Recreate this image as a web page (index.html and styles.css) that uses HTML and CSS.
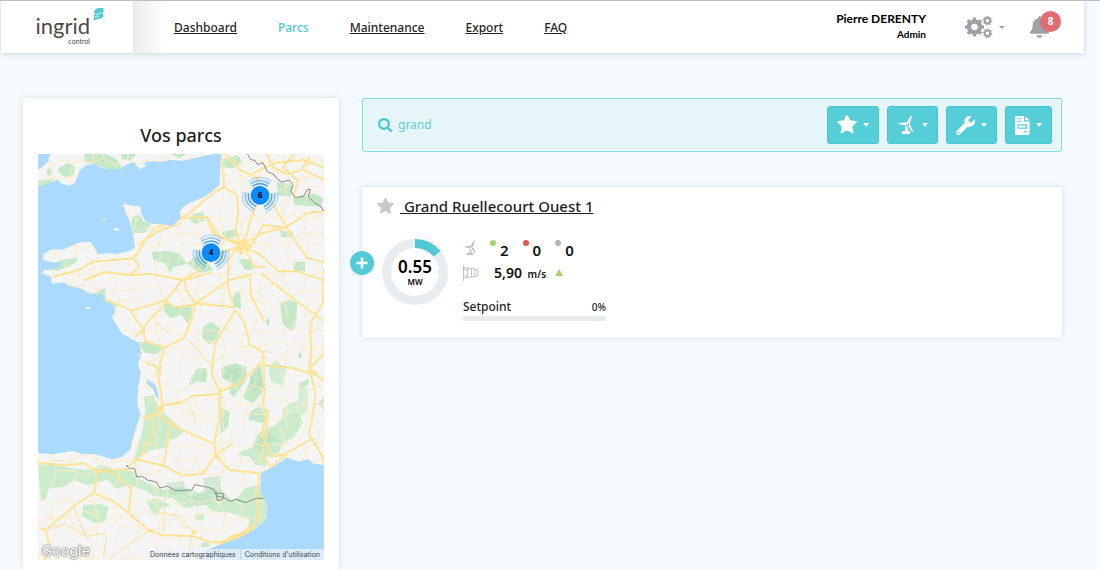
FILE: index.html
```html
<!DOCTYPE html>
<html lang="fr">
<head>
    <meta charset="UTF-8">
    <meta name="viewport" content="width=device-width, initial-scale=1.0">
    <title>ingrid control</title>
    <link rel="stylesheet" href="styles.css">
</head>
<body>
    <svg class="defs" width="0" height="0" aria-hidden="true">
        <symbol id="star" viewBox="64 128 1664 1587">
            <path d="M1728 647q0 22-26 48l-363 354 86 500q1 7 1 20 0 21-10.5 35.5t-30.5 14.5q-19 0-40-12l-449-236-449 236q-22 12-40 12-21 0-31.5-14.5t-10.5-35.5q0-6 2-20l86-500-364-354q-25-27-25-48 0-37 56-46l502-73 225-455q19-41 49-41t49 41l225 455 502 73q56 9 56 46z"/>
        </symbol>
        <symbol id="turbine" viewBox="0 0 20 20">
            <path d="M0 8.400 9.600 7a2 2 0 0 1 1.200 3L8.600 10.600zM10.600 6.800 14.600 0l1.300.4-2.600 8.400a2 2 0 0 1-2.700-2zM11.400 10.600l2.200-1.400 3.400 7.600-1.200.6zM8.800 11.400h2.200l.4 5h2.300v3H5v-3h3.500z"/>
        </symbol>
    </svg>

    <header class="header">
        <a class="logo" href="#" aria-label="ingrid control">
            <span class="logo-name">ingrid</span>
            <span class="logo-sub">control</span>
            <svg class="logo-leaf" width="10" height="13" viewBox="0 0 10 13">
                <path fill="#4fcbd5" d="M0 12.500V5.500Q0 0 5.500 0H9.500v5.500q0 5-5 5.500-2 .2-4.500 1.500z"/>
                <path fill="none" stroke="#fff" stroke-width=".8" d="M0 5.500q2.500 1.500 5 .3t5-.8M.5 9q2.500.6 4.500-1"/>
            </svg>
        </a>
        <nav class="nav">
            <a href="#">Dashboard</a>
            <a href="#" class="active">Parcs</a>
            <a href="#">Maintenance</a>
            <a href="#">Export</a>
            <a href="#">FAQ</a>
        </nav>
        <div class="user">
            <div class="user-name">Pierre DERENTY</div>
            <div class="user-role">Admin</div>
        </div>
        <button class="icon-btn settings" aria-label="Réglages">
            <svg width="28" height="22" viewBox="0 0 28 22" fill="none" stroke="#9da2a6">
                <circle cx="9.500" cy="11" r="5.500" stroke-width="4.500"/>
                <circle cx="9.500" cy="11" r="8.300" stroke-width="2.600" pathLength="80" stroke-dasharray="5 5" stroke-dashoffset="2.500"/>
                <circle cx="22.500" cy="4.800" r="2.700" stroke-width="2"/>
                <circle cx="22.500" cy="4.800" r="4" stroke-width="1.600" pathLength="80" stroke-dasharray="5 5"/>
                <circle cx="22.500" cy="17.200" r="2.700" stroke-width="2"/>
                <circle cx="22.500" cy="17.200" r="4" stroke-width="1.600" pathLength="80" stroke-dasharray="5 5"/>
            </svg>
            <span class="caret"></span>
        </button>
        <button class="icon-btn bell" aria-label="Notifications">
            <svg width="19" height="22" viewBox="0 0 448 512" fill="#9da2a6">
                <path d="M224 512c35.320 0 63.970-28.650 63.970-64H160.030c0 35.350 28.650 64 63.970 64zm215.390-149.710c-19.320-20.760-55.470-51.990-55.470-154.290 0-77.700-54.480-139.900-127.940-155.160V32c0-17.670-14.320-32-31.980-32s-31.980 14.330-31.980 32v20.840C118.560 68.100 64.080 130.300 64.080 208c0 102.300-36.150 133.530-55.470 154.290-6 6.450-8.660 14.160-8.610 21.710.11 16.400 12.980 32 32.100 32h383.800c19.120 0 32-15.600 32.100-32 .05-7.550-2.610-15.270-8.610-21.710z"/>
            </svg>
            <span class="badge">8</span>
        </button>
    </header>

    <main class="content">
        <section class="map-card">
            <h1>Vos parcs</h1>
            <div class="map">
                <svg viewBox="54 192 858 1218" preserveAspectRatio="xMidYMid slice">
                    <defs>
                        <pattern id="lanes" width="190" height="170" patternUnits="userSpaceOnUse">
                            <path fill="none" stroke="#fcecc6" stroke-width="3" stroke-linejoin="round" d="M0 40l28 8 30-14 40 22 34-18 28 10 30-8M20 0l12 24-4 24 18 40-10 36 6 46-22 0M98 56l-8 34 20 30-14 50M132 38l8-38M160 48l-14 46 22 30 22 14M0 138l36-14 54-34 56 4 44-22M0 72l46 16M110 120l58 4-8 46M58 34l10-34"/>
                        </pattern>
                        <g id="cluster">
                            <g fill="none" stroke="#1a8df0" stroke-width="5">
                                <circle r="35" pathLength="360" stroke-dasharray="80 40" transform="rotate(-130)" stroke-opacity=".75"/>
                                <circle r="44" pathLength="360" stroke-dasharray="80 40" transform="rotate(-130)" stroke-opacity=".5"/>
                                <circle r="53" pathLength="360" stroke-dasharray="80 40" transform="rotate(-130)" stroke-opacity=".25"/>
                            </g>
                            <circle r="28" fill="#0a8cff"/>
                        </g>
                    </defs>
                    <rect x="54" y="192" width="858" height="1218" fill="#f5f5f5"/>

                    <!-- forêts -->
                    <g fill="#c5e8c8">
                        <path d="M195 192h60l30 12 20 25-5 8h-38l-40-14-30-8zM120 230l25-12 20 10-5 28-22 8-24-20zM78 240l15-6 4 16-12 8zM54 272l50-6-20 18-30 4zM305 192h45l-20 20-25-4zM450 192h50l-20 12zM610 205l45-8 12 20-30 18-28-4zM770 275l50 10-8 35-38-5zM820 325l60-15 30 14-8 26-80-5z"/>
                        <path d="M335 380l25-5 10 20 24 5-18 28-40 2zM395 485l50-3 35 10 20 30-40 10-10 18-15-30-35-10zM520 372l30-6 6 24-26 12-20-8zM605 425l45-8 5 20-45 12zM500 520l40-30 40 50-40 10zM655 505l40 5 5 28-25 2zM780 420l40 5-5 15-30 2zM820 515h35v28l-35 4z"/>
                        <path d="M90 540l25-28 60-10-10 18-50 22zM215 612l40-18 3 40-28-6zM258 635l35 5-8 20-22-2zM433 634l30 16 50-8 4 40-14 18-20-25-30 10-20-20zM550 710l22-15 28 18-10 35-22 14-22-18zM780 640l30-10 22 8-2 40-6 38-12 6-24-20zM636 625l24-18 4 52-22-10zM345 755l60 5 28 18-25 15-32-4z"/>
                        <path d="M510 870l12-20 8-14 26-2 6 14-4 30-26-4-22 12zM605 830l40-10 35 12-4 40-34 50-14-14 8-28-30-16zM696 850l24-32 6 30 8 50-35 42-30-15 14-36zM600 955l28 8-4 48-22 20zM690 965l30-18 22 24-8 30-48-12zM838 880l30-14-5 20-25 16zM895 940l17-20v40zM600 800l8-4 2 6-8 4zM640 616l6-10 12 2-2 10zM738 690l8-6 2 20-8 4zM835 790l8-4 2 16-10 2z"/>
                    </g>
                    <path fill="#d3edd4" d="M745 830l25-20 28 30-10 48-36-14zM840 890l24 6-2 70-40 20-30-6-8-20 26-20 22-6z"/>
                    <path fill="#cbeccc" d="M370 920l30-4 18 40 40 36 34 32-22 20-24 6-8 22-50 10-34 20-12 8 25-90 10-60zM655 1088l40-14 20-44 50-24 30-30 40-10 12 30-20 40-40 26-10 26-34 16-6 26-30-6-20-24-32-4zM54 1124h50l50 10 60 6 30-16 46 16 36-6 38 36 66 30 60-10 46 18 40-12 28 4 30 30 16-6 26-30 40-10 32 8 6 130-60 30-20-14 16-50-60-20-50-4-26-20-60 10-36-30-60-6-20-16-50-16-40 10-26-26-60 16-40-16-30 20-46 6-8 30-16 6zM190 1246l50-4 26 10-10 40-30 10-40-24zM380 1235l24-10 50 20-30 10-22 24zM525 1272h28l-4 20-24-4zM545 1360l26-8-6 20h-22zM178 1370h32v22h-28z"/>
                    <path fill="#b3dcb9" fill-opacity=".5" d="M550 1165l50-8 4 60-50-10zM620 835l50 0-20 40-40-10zM690 860l30-20 8 50-30 20zM440 1180l50-8 10 40-50 4zM700 1060l50-30 20 20-50 40zM500 1220l60-10 20 30-50 6z"/>
                    <rect x="54" y="192" width="858" height="1218" fill="url(#lanes)"/>

                    <!-- autoroutes -->
                    <g fill="none" stroke="#ffe396" stroke-width="6" stroke-linejoin="round" stroke-linecap="round">
                        <path d="M602 192l6 60 4 40 38 22 5 50-10 60 18 40M615 192l45 48 50 22 10 60-30 70-18 76M660 468l60-36 80-22 60-40 52-6M740 192l20 40 40 20 40-10 30-40M700 250l60-30 90-10 62 22M820 192l-30 40 44 40-14 50M912 270l-60-30M655 460l-75-30-20-50-80 6M480 386l30-18 70-60 32-16M560 380l40 60 56 26M655 470l-82 30-50 50-36 20M655 470l60 20 60 54 56 0 80 28M655 470l-30 40-2 74 14 60M672 470l30 60 30 0M690 475l40-70 70 8 60 90 52 14M800 412l-44-74M480 386l-80 30-40 60-20 30M480 400l-60 20-60 40"/>
                        <path d="M338 505l-120 10-40 24-74 20M338 500l20 30-30 26-70-10-66 24M330 556l60-5 100 20 44-12 40-12M487 568l-50 64-100 30-70-30-120-44M495 570l2 30 30 40 114 12M437 632l30 20 60-8M527 640l100-70 60-16M437 640l-50 50-18 30-20 18M330 660l40 60 6 34 58 18 60-30 34-104M645 660l-60 100-10 90 25 60-4 60M645 660l28 36 16 68 38 22 4 50 4 60-6 50 14 30-4 60-14 60 30 40"/>
                        <path d="M690 555l2 60 40 80M725 550l60 50 80 60 47 32M912 540l-4 100-38 60 4 90-6 60-50-16-90-8M872 850l14 60-6 60-14 60 46 80M870 836l42-46M880 850l32 22M600 905l60-26 64-62M600 912l-84 6-30 18-56 10-20 16M382 820l28 10 10 60 8 50-15 30 36 30 60 30 70 30 10 20M372 984l40-14M402 985l-4 50-40 70-30 22M434 772l-14 50 0 30M600 900l-2 90-16 70 6 40M588 1095l50-36M588 1095l-40 56-60 6-60-30-82-20M588 1100l40 40 90 10M455 990l-14 80-10 58M745 960l-20 70 30 70 40-8 80-46 37 60M755 1130l40-34M718 1150l-6 60 0 80-20 30-60 20-48 36"/>
                        <path d="M54 1118l80 8 60-6 30 22 100-4M230 1142l-6 64-64 44-84 70-22-8M228 1212l50 20 50 40 60 50 40 14 90 2 60 20 60-8 90-40M225 1142l40 4M270 1145l64 50-8 70M76 1320l16 60-20 30M640 1345l-50 30-50 30"/>
                    </g>
                    <g fill="none" stroke="#ffe396" stroke-width="10" stroke-linecap="round">
                        <path d="M640 452l40 24M645 482l40-16M668 450l-6 40M415 952l12 6M870 840l16 10M586 1094l8 10M640 1346l50-30M518 1326h8M390 1322h6"/>
                    </g>
                    <g fill="none" stroke="#fbe0a0" stroke-width="3">
                        <path d="M402 700l14 4 18 16 14 14M500 750l24 16 26 34 24 28M512 955l8 20 8 30M734 780l20 10M820 756l14 4 10 10M76 1320l60-20 60 40 60-10M160 1250l40 90M260 1340l-10 60M388 1322l-60 40-60 40M436 1220l-6 110M520 1326l-50-50-60-10M520 1326l-20 80"/>
                    </g>

                    <!-- mers -->
                    <g fill="#aadaff">
                        <path d="M54 192h36l-5 22-15 14-16 12z"/>
                        <path d="M54 288l20-3 22-9 18-8 8 12 26 7 16-7 8-18 8-22 20-15 25-3 15 10 22 6 38-2 24-14 16-7 18 23 20-10-6-12 28-2 22 2 28-6 40 2 50-12 40-8h22l-1 38-3 55-23 20-25 17-40 16-20 12-12 18 6 15-28 25-25-5-30-1-25-8-12-24-4-22-18-1-34-6 10 30 10 18 10 40 7 45-15 8-40 10-20-3-35 4-10-16-12-20-35 0-50 22-30-2-28 14-2 18 20 6 38 4-10 14-42 8-10 8 29 12 1 20 38-4 14 10 40 10 20 12 18 4 24-2 8 24 18 4 12 26-10 18 30 48 50 27 8 35-10 30 8 25-6 35-5 60 10 30-25 80-5 25-25 23-30 7-50-15-40-2-30-8-60 10-56-5z"/>
                        <path d="M380 868l24 14 8 20 4 24-8-6-8-22-18-16z"/>
                        <path d="M912 1125l-32-4-16-14-28 8-36-12-40 27-38 20 0 50 13 32 9 18-6 40-36 30-47 25-56 20-40 15-16 30h369z"/>
                    </g>
                    <g fill="#f5f5f5">
                        <path d="M248 387l6-4 3 4-6 4zM281 413l16 4v6l-14-2zM196 650l14 2 2 7-12-3zM353 812l12 6 2 18-12-12zM350 790l12 4-4 4z"/>
                    </g>

                    <!-- frontières -->
                    <g fill="none" stroke="#8d8d8d" stroke-width="3" stroke-linejoin="round">
                        <path d="M683 192l8 16 14 4 8 12 16-6 12 26 18 8 16 18 10 6 22-6 12 14-6 20 12 18 24-2 14-22 8 0-6 22 18 18 18 10 11 15"/>
                        <path d="M318 1126l10 8 16 2 6 24 18 0 14 10 26 6 12 18 22-6 24 14 50-2 8-16 40 8 18 6 8 20 20 4 22 12 16-6 30 10 34-14 18 2M588 1208l24 4-4 16-16 4z"/>
                    </g>

                    <use href="#cluster" x="720" y="316"/>
                    <use href="#cluster" x="573" y="488"/>
                    <g class="cluster-count">
                        <text x="720" y="324">6</text>
                        <text x="573" y="496">4</text>
                    </g>
                </svg>
                <span class="map-logo">Google</span>
                <div class="map-legal">
                    <a href="#">Données cartographiques</a>
                    <a href="#">Conditions d'utilisation</a>
                </div>
            </div>
        </section>

        <section class="list">
            <div class="search">
                <label for="q" aria-label="Rechercher">
                    <svg width="14" height="14" viewBox="64 128 1664 1664" fill="#45c8d2">
                        <path d="M1216 832q0-185-131.500-316.500t-316.500-131.500-316.500 131.500-131.500 316.500 131.500 316.500 316.500 131.500 316.500-131.500 131.500-316.500zm512 832q0 52-38 90t-90 38q-54 0-90-38l-343-342q-179 124-399 124-143 0-273.500-55.500t-225-150-150-225-55.500-273.500 55.500-273.500 150-225 225-150 273.500-55.500 273.500 55.500 225 150 150 225 55.500 273.500q0 220-124 399l343 343q37 37 37 90z"/>
                    </svg>
                </label>
                <input id="q" type="text" value="grand">
                <div class="filters">
                    <button aria-label="Favoris">
                        <svg width="20" height="20"><use href="#star"/></svg>
                        <span class="caret"></span>
                    </button>
                    <button aria-label="Éoliennes">
                        <svg width="19" height="20"><use href="#turbine"/></svg>
                        <span class="caret"></span>
                    </button>
                    <button aria-label="Maintenance">
                        <svg width="19" height="19" viewBox="0 0 512 512">
                            <path d="M507.730 109.100c-2.240-9.030-13.540-12.090-20.120-5.510l-74.360 74.360-67.880-11.310-11.310-67.880 74.360-74.360c6.620-6.620 3.430-17.900-5.660-20.160-47.380-11.740-99.550.91-136.580 37.930-39.640 39.640-50.550 97.100-34.050 147.200L18.740 402.760c-24.990 24.990-24.990 65.510 0 90.500 24.990 24.990 65.510 24.990 90.500 0l213.210-213.210c50.120 16.710 107.470 5.680 147.370-34.220 37.070-37.070 49.700-89.320 37.910-136.730zM64 472c-13.250 0-24-10.750-24-24 0-13.260 10.750-24 24-24s24 10.750 24 24c0 13.250-10.750 24-24 24z"/>
                        </svg>
                        <span class="caret"></span>
                    </button>
                    <button aria-label="Rapports">
                        <svg width="15" height="19" viewBox="0 0 15 19">
                            <path fill-rule="evenodd" d="M1 0h8v5.500h5.500V18a1 1 0 0 1-1 1H1a1 1 0 0 1-1-1V1a1 1 0 0 1 1-1zM2.500 2.300v1h4v-1zM2.500 4.800v1h4v-1zM2.500 8.300v4.400h9.500V8.300zM3.700 9.500h7.100v2H3.700zM8.500 15v1H12v-1z"/>
                            <path d="M10.300 0l4.200 4.200h-4.200z"/>
                        </svg>
                        <span class="caret"></span>
                    </button>
                </div>
            </div>

            <article class="park">
                <button class="expand" aria-label="Détails">
                    <svg width="12" height="12" viewBox="0 0 12 12"><path fill="none" stroke="#fff" stroke-width="2.500" d="M6 .5v11M.5 6h11"/></svg>
                </button>
                <h2>
                    <svg width="17" height="17" fill="#c9c9c9"><use href="#star"/></svg>
                    <a href="#">&nbsp;Grand Ruellecourt Ouest 1</a>
                </h2>
                <div class="park-body">
                    <div class="gauge">
                        <svg width="66" height="66" viewBox="0 0 66 66" fill="none" stroke-width="9">
                            <circle cx="33" cy="33" r="28.500" stroke="#e6ecef"/>
                            <circle cx="33" cy="33" r="28.500" stroke="#52c8d6" pathLength="100" stroke-dasharray="14 86" transform="rotate(-90 33 33)"/>
                        </svg>
                        <div class="gauge-text">
                            <strong>0.55</strong>
                            <span>MW</span>
                        </div>
                    </div>
                    <div class="stats">
                        <div class="stat-row">
                            <svg width="15" height="16" fill="#c4c4c4"><use href="#turbine"/></svg>
                            <ul class="counts">
                                <li class="ok">2</li>
                                <li class="error">0</li>
                                <li class="off">0</li>
                            </ul>
                        </div>
                        <div class="stat-row">
                            <svg width="16" height="16" viewBox="0 0 16 16" fill="none" stroke="#c4c4c4">
                                <path d="M.5 0v16M.5 2.500l14.500 2v6.500l-14.500 2M4.500 3v9.500M8.500 3.500v8.500M12 4v7.500M0 5l5-1M0 10.500l5 1"/>
                            </svg>
                            <p class="wind">5,90 <small>m/s</small></p>
                            <span class="up"></span>
                        </div>
                        <div class="setpoint">
                            <label for="setpoint">Setpoint</label>
                            <span>0%</span>
                        </div>
                        <progress id="setpoint" value="0" max="100"></progress>
                    </div>
                </div>
            </article>
        </section>
    </main>
</body>
</html>
```
FILE: styles.css
```css
* {
    box-sizing: border-box;
}
body {
    margin: 0;
    background: #f5fbfe;
    border-top: 1px solid #bfbfbf;
    color: #1f1f1f;
    font-family: "Noto Sans", "Open Sans", sans-serif;
    font-size: 12px;
}
.defs {
    position: absolute;
}
button {
    padding: 0;
    border: 0;
    background: none;
    cursor: pointer;
}
a {
    color: inherit;
}
.caret {
    border: 3px solid transparent;
    border-top-color: currentColor;
    border-bottom: 0;
}

/* header */
.header {
    display: flex;
    align-items: center;
    height: 52px;
    margin: 0 16px 0 1px;
    padding-right: 23px;
    background: #fff;
    box-shadow: 0 1px 6px rgba(60, 100, 120, 0.25);
}
.logo {
    position: relative;
    display: flex;
    flex-direction: column;
    align-items: flex-end;
    width: 132px;
    padding: 13px 43px 0 0;
    align-self: stretch;
    color: #4a4a4a;
    font-family: Lato, sans-serif;
    text-decoration: none;
}
.logo-name {
    font-size: 22px;
    font-weight: 400;
    line-height: 24px;
}
.logo-sub {
    font-size: 7px;
    line-height: 7px;
}
.logo-leaf {
    position: absolute;
    top: 7px;
    right: 29px;
}
.nav {
    display: flex;
    align-items: center;
    align-self: stretch;
    gap: 41px;
    padding-left: 41px;
    background: linear-gradient(to right, #ebebeb, #fff 32px);
    font-weight: 500;
}
.nav .active {
    color: #4ccbd5;
    text-decoration: none;
}
.user {
    margin-left: auto;
    color: #000;
    font-family: Lato, sans-serif;
    font-weight: 700;
    text-align: right;
}
.user-name {
    font-size: 12px;
    line-height: 14px;
}
.user-role {
    font-size: 10px;
    line-height: 16px;
}
.icon-btn {
    display: flex;
    align-items: center;
    color: #9da2a6;
}
.settings {
    gap: 6px;
    margin: 0 25px 0 39px;
}
.bell {
    position: relative;
    width: 31px;
}
.badge {
    position: absolute;
    top: -5px;
    right: 0;
    width: 21px;
    height: 21px;
    border-radius: 50%;
    background: #e06c70;
    color: #fff;
    font: 700 10px/21px "Open Sans", sans-serif;
}

/* content */
.content {
    display: grid;
    grid-template-columns: 316px 1fr;
    align-items: start;
    gap: 23px;
    padding: 45px 38px 0 23px;
}
.map-card,
.park {
    background: #fff;
    box-shadow: 0 0 6px rgba(60, 100, 120, 0.18);
}
.map-card {
    padding: 24px 15px 10px;
}
h1 {
    margin: 0 0 6px;
    font-size: 18px;
    font-weight: 500;
    line-height: 26px;
    text-align: center;
}
.map {
    position: relative;
}
.map > svg {
    display: block;
    width: 100%;
}
.cluster-count {
    font: 700 24px "Open Sans", sans-serif;
    text-anchor: middle;
}
.map-logo {
    position: absolute;
    left: 4px;
    bottom: 0;
    color: #fff;
    font: 500 14px/18px Inter, sans-serif;
    text-shadow: 0 0 1px #777, 0 0 1px #777, 0 0 2px #999;
}
.map-legal {
    position: absolute;
    right: 0;
    bottom: 0;
    display: flex;
    gap: 1px;
    color: #444;
    font: 7px/11px Inter, sans-serif;
}
.map-legal a {
    padding: 0 4px;
    background: rgba(235, 243, 250, 0.75);
    text-decoration: none;
}

/* search */
.search {
    display: flex;
    align-items: center;
    height: 54px;
    padding: 0 9px 0 15px;
    border: 1px solid #7edbe1;
    border-radius: 3px;
    background: #e5f5f8;
    box-shadow: inset 0 0 0 1px #f5fcfd;
}
.search label {
    height: 14px;
}
.search input {
    flex: 1;
    min-width: 0;
    padding: 0 6px;
    border: 0;
    outline: 0;
    background: none;
    color: #63cfd8;
    font: 12px/20px "Noto Sans", "Open Sans", sans-serif;
}
.filters {
    display: flex;
    gap: 8px;
}
.filters button {
    display: flex;
    align-items: center;
    gap: 6px;
    height: 38px;
    padding: 0 9px;
    border: 1px solid #45c8d4;
    border-radius: 3px;
    background: #56ced8;
    color: #fff;
}
.filters svg {
    fill: #fff;
}
.filters .caret {
    border-width: 4px 3px 0;
}

/* park */
.park {
    position: relative;
    margin-top: 35px;
    padding: 8px 15px 17px;
}
.expand {
    position: absolute;
    top: 64px;
    left: -12px;
    display: flex;
    align-items: center;
    justify-content: center;
    width: 24px;
    height: 24px;
    border-radius: 50%;
    background: #52cbd6;
}
h2 {
    display: flex;
    align-items: center;
    gap: 6px;
    margin: 0;
    font-size: 15px;
    font-weight: 500;
    line-height: 22px;
}
.park-body {
    display: flex;
    gap: 15px;
    padding: 18px 0 0 5px;
}
.gauge {
    position: relative;
    height: 66px;
    margin-top: 4px;
}
.gauge-text {
    position: absolute;
    inset: 0;
    display: flex;
    flex-direction: column;
    align-items: center;
    justify-content: center;
    color: #000;
    font-weight: 600;
}
.gauge-text strong {
    font-size: 17px;
    font-weight: 600;
    line-height: 18px;
}
.gauge-text span {
    font-size: 8px;
    line-height: 11px;
}
.stats {
    width: 143px;
}
.stat-row {
    display: flex;
    align-items: center;
    height: 25px;
}
.counts {
    display: flex;
    gap: 14px;
    margin: 0;
    padding: 4px 0 0 12px;
    list-style: none;
    color: #111;
    font-size: 15px;
    font-weight: 600;
    line-height: 20px;
}
.counts li {
    display: flex;
    gap: 4px;
}
.counts li::before {
    content: "";
    width: 6px;
    height: 6px;
    border-radius: 50%;
    background: #b3b3b3;
}
.counts .ok::before {
    background: #a2d665;
}
.counts .error::before {
    background: #e0595d;
}
.wind {
    margin: 0 9px 0 15px;
    color: #111;
    font-size: 14px;
    font-weight: 600;
}
.wind small {
    margin-left: 2px;
    font-size: 10px;
}
.up {
    border: 4px solid transparent;
    border-top: 0;
    border-bottom: 7px solid #a2d665;
}
.setpoint {
    display: flex;
    align-items: center;
    justify-content: space-between;
    margin-top: 13px;
    font-weight: 500;
    line-height: 18px;
}
.setpoint span {
    font-size: 10px;
}
progress {
    display: block;
    width: 100%;
    height: 5px;
    border: 0;
    border-radius: 3px;
    background: #e6ebee;
    appearance: none;
}
progress::-webkit-progress-bar {
    border-radius: 3px;
    background: #e6ebee;
}
progress::-webkit-progress-value {
    background: #52c8d6;
}
```
